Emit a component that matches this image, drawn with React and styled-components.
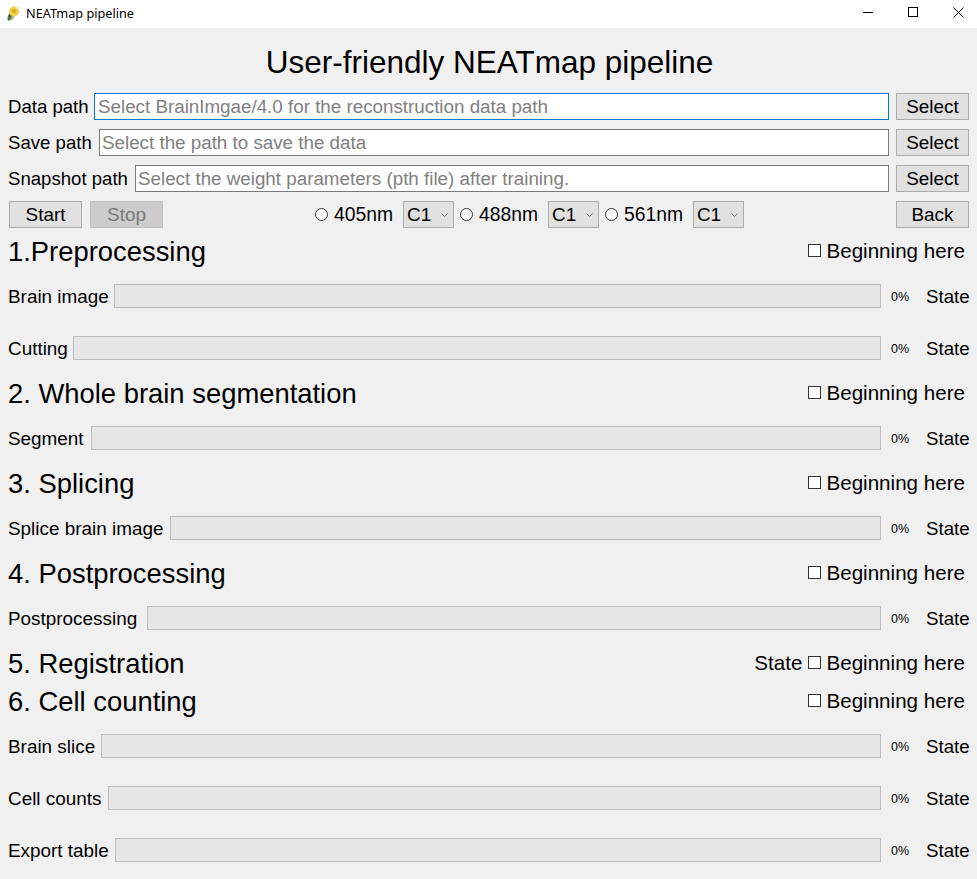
import React from "react";
import styled, { createGlobalStyle } from "styled-components";

const GlobalStyle = createGlobalStyle`
  html, body {
    margin: 0;
    height: 100%;
    background: #f0f0f0;
  }
  * {
    box-sizing: border-box;
  }
`;

const Window = styled.div`
  width: 977px;
  height: 879px;
  overflow: hidden;
  background: #f0f0f0;
  color: #000;
  font-family: "Liberation Sans", Arial, sans-serif;
  font-size: 18.9px;
`;

const TitleBar = styled.div`
  height: 28px;
  background: #fff;
  display: flex;
  align-items: center;
  padding-left: 7px;
`;

const AppName = styled.span`
  margin-left: 6px;
  padding-bottom: 2px;
  font-family: "Noto Sans", sans-serif;
  font-size: 12.7px;
  flex: 1;
`;

const WindowButton = styled.div`
  width: 45px;
  height: 28px;
  padding: 0 0 4px 7px;
  display: flex;
  align-items: center;
  justify-content: center;
`;

const Title = styled.h1`
  margin: 0;
  height: 65px;
  padding: 3px 0 0 2px;
  line-height: 62px;
  text-align: center;
  font-size: 31.5px;
  font-weight: normal;
`;

const Paths = styled.div`
  padding: 0 8px;
  display: flex;
  flex-direction: column;
  gap: 9px;
`;

const PathRow = styled.div`
  height: 27px;
  display: flex;
  align-items: center;
`;

const PathLabel = styled.span`
  width: ${(p) => p.$width}px;
  white-space: nowrap;
  font-size: 18.6px;
`;

const PathInput = styled.input`
  flex: 1;
  min-width: 0;
  height: 27px;
  padding: 0 2px 0 ${(p) => (p.$focused ? 3 : 2)}px;
  background: #fff;
  border: 1px solid ${(p) => (p.$focused ? "#0078d7" : "#7a7a7a")};
  outline: none;
  font: inherit;
  font-size: 18.8px;

  &::placeholder {
    color: #808080;
    opacity: 1;
  }
`;

const Button = styled.button`
  width: 73px;
  height: 27px;
  padding: 0;
  background: ${(p) => (p.disabled ? "#cccccc" : "#e1e1e1")};
  border: 1px solid ${(p) => (p.disabled ? "#bfbfbf" : "#adadad")};
  color: ${(p) => (p.disabled ? "#787878" : "#000")};
  font: inherit;
  margin-left: ${(p) => p.$gap || 0}px;
`;

const ControlRow = styled(PathRow)`
  margin: 9px 0 4px;
  padding: 0 8px 0 9px;
`;

const Lasers = styled.div`
  margin: 0 auto;
  display: flex;
  align-items: center;
`;

const Laser = styled.label`
  display: flex;
  align-items: center;
  font-size: 19.3px;
  margin-left: ${(p) => (p.$first ? 0 : 6)}px;
`;

const Radio = styled.input.attrs({ type: "radio" })`
  appearance: none;
  width: 13px;
  height: 13px;
  margin: 0 6px 0 0;
  background: #fff;
  border: 1px solid #333;
  border-radius: 50%;
`;

const SelectWrap = styled.div`
  position: relative;
  width: 51px;
  height: 27px;
  margin-left: 10px;
`;

const Select = styled.select`
  appearance: none;
  width: 100%;
  height: 100%;
  padding: 0 0 0 3px;
  background: #e1e1e1;
  border: 1px solid #adadad;
  border-radius: 0;
  color: #000;
  font: inherit;
`;

const Chevron = styled.svg`
  position: absolute;
  top: 12px;
  right: 6px;
  pointer-events: none;
`;

const SectionHead = styled.div`
  height: 38px;
  display: flex;
  align-items: center;
  padding: 0 12px 0 8px;
`;

const SectionTitle = styled.h2`
  margin: 0;
  padding-top: 2px;
  flex: 1;
  font-size: 27.4px;
  font-weight: normal;
`;

const Begin = styled.label`
  display: flex;
  align-items: center;
  font-size: 20.6px;
`;

const HeadState = styled.span`
  margin-right: 6px;
  font-size: 20.6px;
`;

const Check = styled.input.attrs({ type: "checkbox" })`
  appearance: none;
  width: 13px;
  height: 13px;
  margin: 0 5px 1px 0;
  background: #fff;
  border: 1px solid #333;
  border-radius: 0;
`;

const ProgressRow = styled.div`
  height: 52px;
  display: flex;
  align-items: center;
  padding: 0 8px;
`;

const BarLabel = styled.span`
  width: ${(p) => p.$width}px;
  padding-top: 2px;
  white-space: nowrap;
`;

const Bar = styled.div`
  flex: 1;
  height: 24px;
  background: #e6e6e6;
  border: 1px solid #bcbcbc;
`;

const Percent = styled.span`
  width: 18px;
  margin-left: 10px;
  padding-top: 2px;
  font-size: 12.5px;
`;

const StateText = styled.span`
  width: 43px;
  margin-left: 17px;
  padding-top: 2px;
  font-size: 18.67px;
  white-space: nowrap;
`;

const Progress = ({ label, width }) => (
  <ProgressRow>
    <BarLabel $width={width}>{label}</BarLabel>
    <Bar />
    <Percent>0%</Percent>
    <StateText>State</StateText>
  </ProgressRow>
);

const Section = ({ title, state, bars = [] }) => (
  <>
    <SectionHead>
      <SectionTitle>{title}</SectionTitle>
      {state && <HeadState>State</HeadState>}
      <Begin>
        <Check />
        Beginning here
      </Begin>
    </SectionHead>
    {bars.map((b) => (
      <Progress key={b.label} {...b} />
    ))}
  </>
);

const Flower = () => (
  <svg width="13" height="16" viewBox="0 0 13 16">
    <path d="M1 15C0 12 0.5 9 3 7L6 10C5 12 3.5 14.5 1 15Z" fill="#56693f" />
    <path d="M3 15c2-1 4-2 5-5L5 9Z" fill="#a9b592" />
    <circle cx="7" cy="5.5" r="5" fill="#efd04a" />
    <circle cx="7" cy="5" r="2.2" fill="#dfb01f" />
    <circle cx="10.5" cy="2" r="1.6" fill="#f6e8a6" />
  </svg>
);

const sections = [
  {
    title: "1.Preprocessing",
    bars: [
      { label: "Brain image", width: 106 },
      { label: "Cutting", width: 65 },
    ],
  },
  { title: "2. Whole brain segmentation", bars: [{ label: "Segment", width: 83 }] },
  { title: "3. Splicing", bars: [{ label: "Splice brain image", width: 162 }] },
  { title: "4. Postprocessing", bars: [{ label: "Postprocessing", width: 139 }] },
  { title: "5. Registration", state: true },
  {
    title: "6. Cell counting",
    bars: [
      { label: "Brain slice", width: 93 },
      { label: "Cell counts", width: 100 },
      { label: "Export table", width: 107 },
    ],
  },
];

const paths = [
  { label: "Data path", width: 86, hint: "Select BrainImgae/4.0 for the reconstruction data path", focused: true },
  { label: "Save path", width: 91, hint: "Select the path to save the data" },
  { label: "Snapshot path", width: 127, hint: "Select the weight parameters (pth file) after training." },
];

const App = () => (
  <Window>
    <GlobalStyle />
    <TitleBar>
      <Flower />
      <AppName>NEATmap pipeline</AppName>
      <WindowButton>
        <svg width="10" height="10" viewBox="0 0 10 10">
          <path d="M0 5.5H10" stroke="#000" fill="none" />
        </svg>
      </WindowButton>
      <WindowButton>
        <svg width="10" height="10" viewBox="0 0 10 10">
          <rect x="0.5" y="0.5" width="9" height="9" stroke="#000" fill="none" />
        </svg>
      </WindowButton>
      <WindowButton>
        <svg width="11" height="11" viewBox="0 0 11 11">
          <path d="M0.5 0.5L10.5 10.5M10.5 0.5L0.5 10.5" stroke="#000" fill="none" />
        </svg>
      </WindowButton>
    </TitleBar>

    <Title>User-friendly NEATmap pipeline</Title>

    <Paths>
      {paths.map((p) => (
        <PathRow key={p.label}>
          <PathLabel $width={p.width}>{p.label}</PathLabel>
          <PathInput placeholder={p.hint} $focused={p.focused} />
          <Button $gap={7}>Select</Button>
        </PathRow>
      ))}
    </Paths>

    <ControlRow>
      <Button>Start</Button>
      <Button disabled $gap={8}>
        Stop
      </Button>
      <Lasers>
        {["405nm", "488nm", "561nm"].map((nm, i) => (
          <React.Fragment key={nm}>
            <Laser $first={i === 0}>
              <Radio name="laser" />
              {nm}
            </Laser>
            <SelectWrap>
              <Select defaultValue="C1">
                <option>C1</option>
                <option>C2</option>
              </Select>
              <Chevron width="7" height="4" viewBox="0 0 7 4">
                <path d="M0.5 0.5L3.5 3.5L6.5 0.5" stroke="#777" fill="none" />
              </Chevron>
            </SelectWrap>
          </React.Fragment>
        ))}
      </Lasers>
      <Button>Back</Button>
    </ControlRow>

    {sections.map((s) => (
      <Section key={s.title} {...s} />
    ))}
  </Window>
);

export default App;
